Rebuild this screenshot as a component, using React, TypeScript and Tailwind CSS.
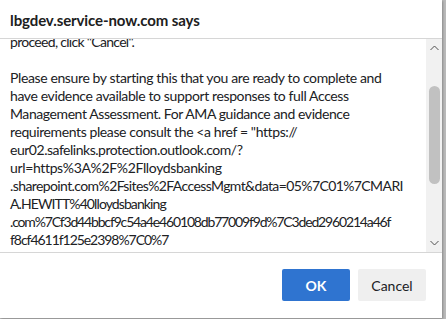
import React from 'react';

const lines: [string, string][] = [
  ['proceed, click "Cancel".', 'tracking-[-0.7px]'],
  ['', ''],
  ['Please ensure by starting this that you are ready to complete and', 'tracking-[-0.38px]'],
  ['have evidence available to support responses to full Access', 'tracking-[-0.38px]'],
  ['Management Assessment. For AMA guidance and evidence', 'tracking-[-0.42px]'],
  ['requirements please consult the <a href = "https://', 'tracking-[-0.4px]'],
  ['eur02.safelinks.protection.outlook.com/?', 'tracking-[-0.48px]'],
  ['url=https%3A%2F%2Flloydsbanking', 'tracking-[-0.35px]'],
  ['.sharepoint.com%2Fsites%2FAccessMgmt&data=05%7C01%7CMARI', 'tracking-[-0.6px]'],
  ['A.HEWITT%40lloydsbanking', 'tracking-[-0.9px]'],
  ['.com%7Cf3d44bbcf9c54a4e460108db77009f9d%7C3ded2960214a46f', 'tracking-[-1.16px]'],
  ['f8cf4611f125e2398%7C0%7', 'tracking-[-1.05px]'],
  ['0%7C638229468852473216%7CUnknown%7CTWFpbGZsb3d8eyJWIjoiMC4w', 'tracking-[-1px]'],
];

function Chevron({ up }: { up?: boolean }) {
  return (
    <svg width="9" height="6" viewBox="0 0 9 6" className="text-[#505050]">
      <path
        d={up ? 'M0.5 5 L4.5 1 L8.5 5' : 'M0.5 1 L4.5 5 L8.5 1'}
        fill="none"
        stroke="currentColor"
        strokeWidth="1"
      />
    </svg>
  );
}

export default function App() {
  return (
    <div
      className="w-[446px] h-[319px] bg-[#b9b9b9] overflow-hidden"
      style={{ fontFamily: 'Lato, "Noto Sans", sans-serif' }}
    >
      <div className="w-[442px] h-[318px] bg-white flex flex-col shadow-[1px_1px_2px_rgba(0,0,0,0.25)]">
        <div className="h-[39px] shrink-0 border-b border-[#d6d6d6] flex items-center pl-[10px] pt-[2px]">
          <span className="text-[15px] font-bold text-[#202020] leading-none tracking-[-0.1px]">
            lbgdev.service-now.com says
          </span>
        </div>

        <div className="h-[214px] shrink-0 flex border-b border-[#d6d6d6]">
          <div className="flex-1 overflow-hidden pl-[10px]">
            <div className="-mt-[6px] text-[14px] leading-[18px] text-[#202124]">
              {lines.map(([l, t], i) => (
                <div key={i} className={`whitespace-nowrap h-[18px] ${t}`}>
                  {l}
                </div>
              ))}
            </div>
          </div>
          <div className="w-[16px] shrink-0 bg-[#f1f1f1] flex flex-col items-center">
            <div className="h-[16px] flex items-center justify-center pt-[2px]">
              <Chevron up />
            </div>
            <div className="mt-[31px] w-[11px] h-[98px] rounded-full bg-[#c1c1c1]" />
            <div className="flex-1" />
            <div className="h-[16px] flex items-center justify-center pb-[2px]">
              <Chevron />
            </div>
          </div>
        </div>

        <div className="flex-1 flex justify-end items-start pt-[16px] pr-[16px] gap-[8px]">
          <button className="w-[68px] h-[32px] rounded-[2px] bg-[#2f74d0] text-white text-[14px] font-bold">
            OK
          </button>
          <button className="w-[68px] h-[32px] rounded-[2px] bg-[#efefef] text-[#202124] text-[14px]">
            Cancel
          </button>
        </div>
      </div>
    </div>
  );
}
